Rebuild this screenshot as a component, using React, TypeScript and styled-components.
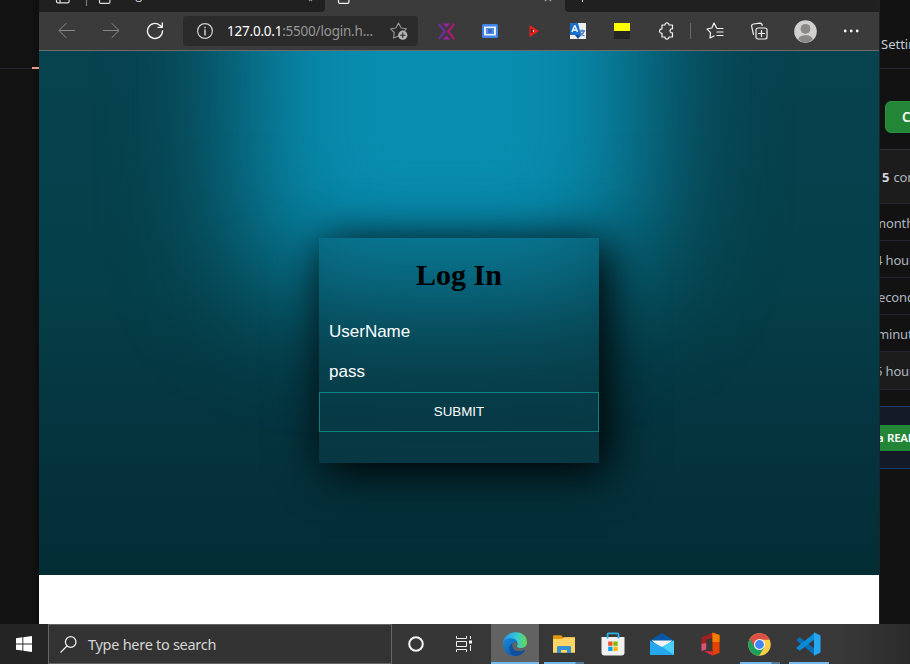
import React from 'react';
import styled, { createGlobalStyle, css } from 'styled-components';

const uiFont = '"Open Sans", "Noto Sans", sans-serif';

const GlobalStyle = createGlobalStyle`
  * { box-sizing: border-box; }
  body { margin: 0; background: #121212; overflow: hidden; }
`;

const Desktop = styled.div`
  display: grid;
  grid-template: 624px 40px / 910px;
  width: 910px;
  height: 664px;
  overflow: hidden;
  font-family: ${uiFont};
`;

const Workspace = styled.div`
  display: grid;
  grid-template-columns: 39px 841px 30px;
  min-height: 0;
`;

const LeftStrip = styled.div`
  display: flex;
  flex-direction: column;
  align-items: flex-end;
  background: linear-gradient(90deg, #131313 80%, #0e0e0e);
`;
const LeftHeader = styled.div`
  width: 100%;
  height: 69px;
  border-bottom: 1px solid #22252b;
`;
const TabMarker = styled.div`
  width: 7px;
  height: 2px;
  margin-top: -2px;
  background: #e5978a;
`;

const Browser = styled.div`
  display: grid;
  grid-template-rows: 12px 39px 524px 49px;
  overflow: hidden;
  border-right: 1px solid #1b2427;
`;

const TabStrip = styled.div`
  display: grid;
  grid-template-columns: 286px 240px 1fr;
  background: #3b3b3b;
  overflow: hidden;
`;
const Tab = styled.div<{ $dark?: boolean; $side?: 'left' | 'right' }>`
  position: relative;
  overflow: hidden;
  background: ${p => (p.$dark ? '#202020' : '#3b3b3b')};
  ${p => p.$side === 'left' && css`border-bottom-right-radius: 4px;`}
  ${p => p.$side === 'right' && css`border-bottom-left-radius: 4px;`}
`;
const TabArt = styled.svg`
  display: block;
`;
const TabTitle = styled.span`
  position: absolute;
  left: 83px;
  top: -14px;
  font-size: 12px;
  line-height: 18px;
  color: #ddd;
`;

const Toolbar = styled.div`
  display: flex;
  align-items: center;
  padding-left: 6px;
  background: #3b3b3b;
  border-bottom: 1px solid #6b6b6b;
`;
const ToolButton = styled.div<{ $w?: number }>`
  display: flex;
  flex: none;
  align-items: center;
  justify-content: center;
  width: ${p => p.$w ?? 44}px;
  height: 36px;
`;
const Address = styled.div`
  display: flex;
  flex: none;
  align-items: center;
  width: 235px;
  height: 30px;
  margin: 0 6px;
  padding: 0 10px 0 13px;
  border-radius: 4px;
  background: #2b2b2b;
`;
const Url = styled.div`
  flex: 1;
  margin-left: 13px;
  color: #969696;
  font-family: "Noto Sans", sans-serif;
  font-size: 13.5px;
  letter-spacing: -0.22px;
  line-height: 20px;
  white-space: nowrap;
`;
const Host = styled.span`
  color: #fff;
`;
const Divider = styled.div`
  width: 1px;
  height: 16px;
  margin: 0 2px;
  background: #686868;
`;

const LoginPage = styled.main`
  position: relative;
  isolation: isolate;
  display: flex;
  justify-content: center;
  align-items: flex-start;
  padding-top: 187px;
  overflow: hidden;
  background: linear-gradient(#07424f, #053f49 45%, #05333e 75%, #032d35);
`;
const Glow = styled.div`
  position: absolute;
  z-index: -1;
  left: 203px;
  top: -300px;
  width: 404px;
  height: 543px;
  border-radius: 80px;
  background: #088db0;
  filter: blur(62px);
`;
const Card = styled.form`
  display: flex;
  flex-direction: column;
  width: 280px;
  height: 225px;
  margin: 0;
  background: linear-gradient(rgba(14, 70, 84, 0.2), rgba(14, 70, 84, 0.26));
  box-shadow: 7px 7px 44px 2px #000;
`;
const Title = styled.h1`
  margin: 18px 0 19px;
  text-align: center;
  font: bold 30px/37px "Liberation Serif", serif;
  color: #000;
`;
const Field = styled.input`
  width: 100%;
  height: 40px;
  margin: 0;
  padding: 0 10px 1px;
  border: 0;
  outline: 0;
  background: transparent;
  font: 17px "Liberation Sans", sans-serif;
  color: #fff;
  &::placeholder { color: #fff; opacity: 1; }
`;
const Submit = styled.button`
  height: 40px;
  margin: 0;
  padding: 0 0 2px;
  border: 1px solid #078481;
  background: transparent;
  font: 13.333px "Liberation Sans", sans-serif;
  color: #fff;
`;
const BlankArea = styled.div`
  background: #fff;
`;

const RepoPane = styled.aside`
  display: flex;
  flex-direction: column;
  overflow: hidden;
  background: #121212;
  color: #aeb6bf;
  font-family: "Noto Sans", sans-serif;
  font-size: 13px;
  white-space: nowrap;
`;
const RepoHeader = styled.div`
  height: 69px;
  padding: 34px 0 0 1px;
  border-bottom: 1px solid #23262f;
  line-height: 20px;
  color: #c3cbd3;
`;
const CodeButton = styled.div`
  flex: none;
  width: 80px;
  height: 32px;
  margin: 32px 0 16px 5px;
  padding-left: 16px;
  border: 1px solid #2a8f40;
  border-radius: 6px;
  background: #238636;
  color: #fff;
  font-size: 13.5px;
  font-weight: 600;
  line-height: 31px;
`;
const RepoRow = styled.div<{ $h: number; $shift: number; $raised?: boolean }>`
  flex: none;
  height: ${p => p.$h}px;
  line-height: ${p => p.$h + 1}px;
  border-bottom: 1px solid #24262e;
  background: ${p => (p.$raised ? '#1c1c1c' : '#121212')};
  letter-spacing: -0.15px;
  text-indent: ${p => p.$shift}px;
`;
const RepoList = styled.div`
  flex: none;
  border-top: 1px solid #2e3036;
`;
const Strong = styled.b`
  margin-right: 1px;
  color: #cfd6dd;
`;
const ReadmePrompt = styled.div`
  display: flex;
  align-items: center;
  flex: none;
  height: 63px;
  margin-top: 16px;
  border: solid #1f3b69;
  border-width: 1px 0;
  background: #141a26;
`;
const ReadmeButton = styled.div`
  width: 30px;
  height: 26px;
  overflow: hidden;
  background: #238636;
  color: #fff;
  font-size: 11.5px;
  font-weight: 600;
  letter-spacing: -0.3px;
  line-height: 26px;
  text-indent: -3px;
  word-spacing: 1px;
`;

const Taskbar = styled.footer`
  display: flex;
  background: linear-gradient(90deg, #232323, #363636 43%, #393939 92%, #2b2b2b);
`;
const Start = styled.div`
  display: flex;
  align-items: center;
  justify-content: center;
  width: 48px;
`;
const Search = styled.div`
  display: flex;
  align-items: center;
  width: 344px;
  padding-left: 11px;
  border: 1px solid #646464;
  background: #333;
`;
const SearchText = styled.span`
  margin-left: 11px;
  padding-bottom: 1px;
  color: #d5d5d5;
  font-family: "Noto Sans", sans-serif;
  font-size: 14.5px;
  letter-spacing: -0.28px;
`;
const TaskList = styled.div`
  display: grid;
  grid-template-columns: 48px 49px 50px repeat(6, 49px);
`;
const Task = styled.div<{ $active?: boolean }>`
  display: flex;
  flex-direction: column;
  align-items: center;
  ${p => p.$active && css`background: #626262; background-clip: content-box; padding: 0 0 0 2px;`}
`;
const TaskIcon = styled.div`
  display: flex;
  align-items: center;
  justify-content: center;
  height: 38px;
  padding-top: 2px;
`;
const Running = styled.div<{ $wide?: boolean; $stack?: boolean }>`
  width: ${p => (p.$wide ? 48 : 40)}px;
  height: 2px;
  background: ${p => (p.$stack ? 'linear-gradient(90deg, #76b9ed 31px, #527b9b 32px)' : '#76b9ed')};
`;

const Line = ({ size = 18, children, color = '#f2f2f2', w = 1.1 }: { size?: number; children: React.ReactNode; color?: string; w?: number }) => (
  <svg width={size} height={size} viewBox="0 0 18 18" fill="none" stroke={color} strokeWidth={w} strokeLinecap="round" strokeLinejoin="round">
    {children}
  </svg>
);

const BackIcon = () => <Line color="#8a8a8a" w={1}><path d="M16.5 8.5H1.5M8 1.5l-7 7 7 7" /></Line>;
const ForwardIcon = () => <Line color="#8a8a8a" w={1}><path d="M1.5 8.5h15M10 1.5l7 7-7 7" /></Line>;
const ReloadIcon = () => <Line w={1.35}><path d="M16.5 9A7.5 7.5 0 1 1 13.8 3.2L16 5M16.3 1v4.3H12" /></Line>;
const InfoIcon = () => <Line w={1.2} color="#d0d0d0"><circle cx="9" cy="9" r="7.4" /><path d="M9 8v5M9 5.2v.5" strokeWidth="1.5" /></Line>;
const StarPlusIcon = () => (
  <Line color="#969696">
    <path d="M8.5 14 3.5 16l.8-5.5L.7 6.8l5.2-.8L8.5 1l2.7 5 5.2.8-2 2" />
    <circle cx="12.8" cy="13.2" r="4.6" fill="#b5b5b5" stroke="none" />
    <path d="M12.8 10.9v4.6M10.5 13.2h4.6" stroke="#2b2b2b" />
  </Line>
);
const CrossIcon = () => (
  <svg width="17" height="17" viewBox="0 0 17 17">
    <path d="M.8 1 6.8 8.5.8 16" fill="none" stroke="#712c9c" strokeWidth="2.3" />
    <path d="M16.2 1 10.2 8.5l6 7.5" fill="none" stroke="#a91c75" strokeWidth="2.3" />
    <path d="M4.8.5h7.4L8.5 4.5zM4.8 16.5h7.4L8.5 12.5z" fill="#9a249d" />
  </svg>
);
const ScreenIcon = () => (
  <svg width="16" height="14" viewBox="0 0 16 14">
    <rect width="16" height="14" rx="1.5" fill="#4285e8" />
    <rect x="2" y="2.5" width="12" height="9" fill="#e8f0fb" />
    <rect x="4" y="4" width="8" height="6" fill="#568de1" />
    <rect x="6" y="5" width="4" height="4" fill="#346bc4" />
  </svg>
);
const PlayIcon = () => (
  <svg width="10" height="12" viewBox="0 0 10 12">
    <path d="M.5 0 10 6 .5 12z" fill="#ed2020" /><path d="M1.8 3.8 4.6 5v2L1.8 8z" fill="#581414" /><path d="M3.8 4.8 5.4 6 3.8 7.2z" fill="#fff" />
  </svg>
);
const TranslateIcon = () => (
  <svg width="16" height="16" viewBox="0 0 16 16">
    <path d="M0 0h16v16H0z" fill="#eee" /><path d="M0 0h8l3 12H0z" fill="#1670cd" /><path d="M5 12h6l-3 4z" fill="#134f9c" />
    <path d="m2 9 2.5-6h.6L7.5 9M3 7h3.5" stroke="#fff" strokeWidth="1.3" fill="none" />
    <path d="M9.5 8H15M12 6.5V8m2 0c-.5 2.5-2 3.8-4 5m0-4c1 2 2.5 3 4.5 4" stroke="#4179c4" strokeWidth="1.3" fill="none" />
  </svg>
);
const FlagIcon = () => <svg width="16" height="16"><path d="M0 0h16v8H0z" fill="#ff0" /><path d="M0 8h16v8H0z" fill="#252525" /></svg>;
const PuzzleIcon = () => (
  <Line w={1.2}><path d="M5 3h3c-.3-2.8 4.2-2.8 4 0h3.5v3.8c-3.3-.7-3.3 4.7 0 4V15H12c.2 2.7-4.3 2.7-4 0H5v-3.7c-3.3.2-3.3-4.6 0-4.4z" /></Line>
);
const FavoritesIcon = () => <Line w={1.2}><path d="M10.5 5.8 8 1 5.8 6 1 7l3.5 3.7L4 16l4-2M11 6.5h6M11 10h6M11 13.5h6" /></Line>;
const CollectionsIcon = () => <Line w={1.2}><path d="M3.5 12.3 1.8 5.2C1.3 3 2 2.3 3.5 2L10 1.2c1.3 0 2 .6 2.2 2.2" /><rect x="6" y="6" width="11" height="11" rx="2" /><path d="M11.5 8.5v6M8.5 11.5h6" /></Line>;
const Avatar = () => (
  <svg width="23" height="23" viewBox="0 0 23 23">
    <circle cx="11.5" cy="11.5" r="11.3" fill="#d2d0ce" /><circle cx="11.5" cy="8.8" r="4.9" fill="#8a8886" />
    <path d="M4.2 19.4c1.4-5.5 13.2-5.5 14.6 0a10.8 10.8 0 0 1-14.6 0z" fill="#8a8886" />
  </svg>
);
const MoreIcon = () => <svg width="16" height="4" fill="#f3f3f3"><circle cx="2.2" cy="2" r="1.4" /><circle cx="8.2" cy="2" r="1.4" /><circle cx="14.2" cy="2" r="1.4" /></svg>;

const WindowsIcon = () => <svg width="16" height="16" fill="#fff"><path d="M0 2.2 6.4 1.3v6.2H0zM7.3 1.2 16 0v7.5H7.3zM0 8.4h6.4v6.2L0 13.7zM7.3 8.4H16V16l-8.7-1.2z" /></svg>;
const SearchIcon = () => <svg width="17" height="17" fill="none" stroke="#eee" strokeWidth="1.3"><circle cx="10.7" cy="6" r="5.3" /><path d="M7 10 .5 16.5" /></svg>;
const CortanaIcon = () => <svg width="16" height="16"><circle cx="8" cy="8" r="6.8" fill="none" stroke="#f5f5f5" strokeWidth="2" /></svg>;
const TaskViewIcon = () => (
  <svg width="17" height="16" fill="none" stroke="#eee" strokeWidth="1"><path d="M.5 0v2.5h10V0M.5 16v-2.5h10V16M.5 5.5h10v5H.5zM14.5 0v3M14.5 9v6" /><path d="M13 4.5h3v3h-3z" fill="#fff" stroke="none" /></svg>
);
const EdgeIcon = () => (
  <svg width="24" height="24" viewBox="0 0 24 24">
    <defs>
      <linearGradient id="edgeTop"><stop offset=".1" stopColor="#269ce2" /><stop offset=".55" stopColor="#34c8dc" /><stop offset="1" stopColor="#65dc4c" /></linearGradient>
      <linearGradient id="edgeBase" x1="0" y1="0" x2="1" y2="1"><stop stopColor="#168bd8" /><stop offset="1" stopColor="#0b4a9b" /></linearGradient>
    </defs>
    <path d="M.2 10.7C1.5-3 23.5-3.3 24 10c0 4.7-3.2 6-6.4 6-3 0-4.2-1.2-3.4-2.3 2-3-1.7-6.5-6.8-5.6C4.3 8.3 1.5 10 .2 12z" fill="url(#edgeTop)" />
    <path d="M.1 12c.3-4.3 4.7-6.2 8.5-5.7 3.4.4 5.5 2.4 5.9 4.4-2.7-2-5.7.6-5.1 3.8.6 3.5 4 5.8 9.5 4.4 1.7-.5 3.3-1.4 2.7-.2C15.8 28 .3 25.2.1 12z" fill="url(#edgeBase)" />
    <path d="M9.4 14.5c.6 3.5 4 5.8 9.5 4.4 1.7-.5 3.3-1.4 2.7-.2-2 3-5 5-8.6 5.2-6.7-.6-9.2-9.5-3.4-13-.5 1-.5 2.4-.2 3.6z" fill="#114f9b" />
  </svg>
);
const ExplorerIcon = () => (
  <svg width="22" height="19" viewBox="0 0 22 19">
    <path d="M0 1.5C0 .7.5.3 1.2.3h7L10 2.4h11.5v5H0z" fill="#e19b09" /><path d="M0 4h9l1.8-1.7H22v15.4H0z" fill="#ffd565" />
    <path d="M4 18V12.5c0-1 .6-1.5 1.5-1.5h11c1 0 1.5.5 1.5 1.5V18h-4v-3H8v3z" fill="#348fd3" />
  </svg>
);
const StoreIcon = () => (
  <svg width="24" height="24" viewBox="0 0 24 24">
    <path d="M.5 5h23v15.5c0 2-1 3-3 3h-17c-2 0-3-1-3-3z" fill="#f0f0f0" />
    <path d="M6.5 6.5v-4c0-.8.4-1.2 1.2-1.2h8.6c.8 0 1.2.4 1.2 1.2v4" fill="none" stroke="#26b4ec" strokeWidth="1.8" />
    <path d="M7.2 9.5h4.3v4.3H7.2z" fill="#f25022" /><path d="M12.4 9.5h4.3v4.3h-4.3z" fill="#7fba00" /><path d="M7.2 14.7h4.3V19H7.2z" fill="#00a4ef" /><path d="M12.4 14.7h4.3V19h-4.3z" fill="#ffb900" />
  </svg>
);
const MailIcon = () => (
  <svg width="24" height="22" viewBox="0 0 24 22">
    <path d="M0 7.5 12 0l12 7.5V14H0z" fill="#0758a9" /><path d="M1.5 7.5h21L12 16z" fill="#f4f4f4" />
    <path d="M0 7.5 12 14l12-6.5V22H0z" fill="#24a7ec" /><path d="m24 7.5-12 6.2L24 22z" fill="#4bd1f5" />
  </svg>
);
const OfficeIcon = () => (
  <svg width="19" height="24" viewBox="0 0 19 24">
    <path d="M.5 5.5 12 .5v5.2L5.2 7.5v10L.5 19z" fill="#a32022" /><path d="M.5 12 5.2 11v6.5L.5 19z" fill="#d45777" />
    <path d="M11.5.5 18.5 3v18l-7 2.5z" fill="#e64203" /><path d="M11.5.5 18.5 3v7h-7z" fill="#f47d00" /><path d="M3 19.2h8.5v4.3z" fill="#e9293e" />
  </svg>
);
const ChromeIcon = () => (
  <svg width="23" height="23" viewBox="0 0 24 24">
    <circle cx="12" cy="12" r="11.7" fill="#ffcd46" />
    <path d="M12 12 1.9 6.1A11.7 11.7 0 0 0 11.5 23.7L17.1 15z" fill="#19a15f" />
    <path d="M1.9 6.1A11.7 11.7 0 0 1 22.6 7H12l-5 8z" fill="#dd5144" />
    <circle cx="12" cy="12" r="5.8" fill="#f1f1f1" /><circle cx="12" cy="12" r="4.6" fill="#4285f4" />
  </svg>
);
const CodeIcon = () => (
  <svg width="25" height="24" viewBox="0 0 25 24">
    <path d="m.8 7.5 2-1.8c.5-.4 1-.4 1.5 0L19 17v6.5L.8 8.8c-.5-.5-.5-.9 0-1.3z" fill="#0a6fb8" />
    <path d="m.8 16.5 2 1.8c.5.4 1 .4 1.5 0L19 7V.5L.8 15.2c-.5.5-.5.9 0 1.3z" fill="#0b8bd5" />
    <path d="m18 .3 5.7 2.6c.6.3.8.7.8 1.4v15.4c0 .7-.2 1.1-.8 1.4L18 23.7z" fill="#26a7f2" />
  </svg>
);

const tasks: { icon: React.ReactNode; running?: 'single' | 'stack' | 'active' }[] = [
  { icon: <CortanaIcon /> },
  { icon: <TaskViewIcon /> },
  { icon: <EdgeIcon />, running: 'active' },
  { icon: <ExplorerIcon />, running: 'stack' },
  { icon: <StoreIcon /> },
  { icon: <MailIcon /> },
  { icon: <OfficeIcon /> },
  { icon: <ChromeIcon />, running: 'stack' },
  { icon: <CodeIcon />, running: 'single' },
];

const extensions = [CrossIcon, ScreenIcon, PlayIcon, TranslateIcon, FlagIcon, PuzzleIcon];

export default function App() {
  return (
    <>
      <GlobalStyle />
      <Desktop>
        <Workspace>
          <LeftStrip><LeftHeader /><TabMarker /></LeftStrip>
          <Browser>
            <TabStrip>
              <Tab $dark $side="left">
                <TabArt width="286" height="12" fill="none" stroke="#ddd" strokeWidth="1.2">
                  <path d="M17.5-4V1.5q0 1.3 1.3 1.3h10q1.3 0 1.3-1.3V-4M21 0v2.5M60.5-3v5.2q0 1.2 1.2 1.2h8q1.2 0 1.2-1.2V-3" />
                  <path d="M47.5 0v6" stroke="#777" />
                  <path d="m270-2 3 3M273-2l-3 3" stroke="#888" />
                </TabArt>
                <TabTitle>Login</TabTitle>
              </Tab>
              <Tab>
                <TabArt width="240" height="12" fill="none" stroke="#f2f2f2" strokeWidth="1.2">
                  <path d="M13.5-3v5.2q0 1.2 1.2 1.2h8q1.2 0 1.2-1.2V-3" />
                  <path d="m220 1 3-3M223-2l3 3" stroke="#aaa" />
                </TabArt>
              </Tab>
              <Tab $dark $side="right"><TabArt width="40" height="12"><path d="M17 0h1v2h-1z" fill="#ddd" /></TabArt></Tab>
            </TabStrip>
            <Toolbar>
              <ToolButton><BackIcon /></ToolButton>
              <ToolButton><ForwardIcon /></ToolButton>
              <ToolButton><ReloadIcon /></ToolButton>
              <Address>
                <InfoIcon />
                <Url><Host>127.0.0.1</Host>:5500/login.h...</Url>
                <StarPlusIcon />
              </Address>
              {extensions.map((Icon, i) => <ToolButton key={i}><Icon /></ToolButton>)}
              <Divider />
              <ToolButton><FavoritesIcon /></ToolButton>
              <ToolButton><CollectionsIcon /></ToolButton>
              <ToolButton $w={48}><Avatar /></ToolButton>
              <ToolButton><MoreIcon /></ToolButton>
            </Toolbar>
            <LoginPage>
              <Glow />
              <Card onSubmit={e => e.preventDefault()}>
                <Title>Log In</Title>
                <Field placeholder="UserName" />
                <Field placeholder="pass" />
                <Submit>SUBMIT</Submit>
              </Card>
            </LoginPage>
            <BlankArea />
          </Browser>
          <RepoPane>
            <RepoHeader>Settings</RepoHeader>
            <CodeButton>Code</CodeButton>
            <RepoList>
              <RepoRow $h={54} $shift={2} $raised><Strong>5</Strong> commits</RepoRow>
              <RepoRow $h={37} $shift={-6}>months ago</RepoRow>
              <RepoRow $h={37} $shift={-5}>4 hours ago</RepoRow>
              <RepoRow $h={37} $shift={-8}>seconds ago</RepoRow>
              <RepoRow $h={37} $shift={-3}>minutes ago</RepoRow>
              <RepoRow $h={38} $shift={-5} $raised>5 hours ago</RepoRow>
            </RepoList>
            <ReadmePrompt><ReadmeButton>a README</ReadmeButton></ReadmePrompt>
          </RepoPane>
        </Workspace>
        <Taskbar>
          <Start><WindowsIcon /></Start>
          <Search><SearchIcon /><SearchText>Type here to search</SearchText></Search>
          <TaskList>
            {tasks.map(({ icon, running }, i) => (
              <Task key={i} $active={running === 'active'}>
                <TaskIcon>{icon}</TaskIcon>
                {running && <Running $wide={running === 'active'} $stack={running === 'stack'} />}
              </Task>
            ))}
          </TaskList>
        </Taskbar>
      </Desktop>
    </>
  );
}
